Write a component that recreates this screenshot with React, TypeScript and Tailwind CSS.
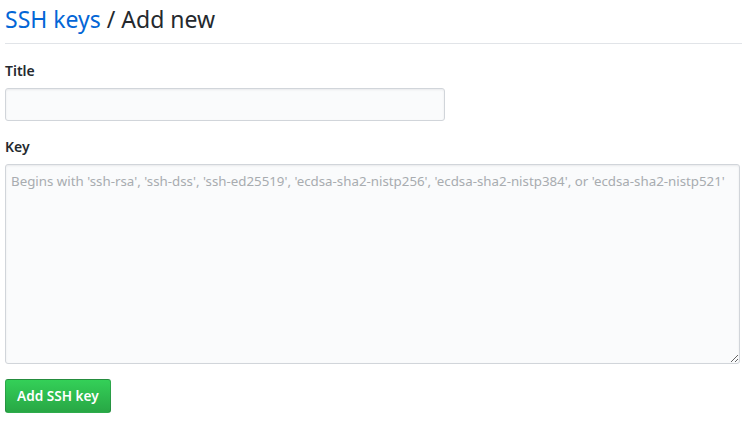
import React from 'react';

const font = { fontFamily: '"Noto Sans", "Open Sans", Arial, sans-serif' };

export default function App() {
  return (
    <div className="w-[753px] h-[427px] bg-white pl-[5px] pr-[11px]" style={font}>
      <div className="flex items-end h-[44px] pb-[9px] border-b border-[#e1e4e8]">
        <h2 className="text-[23px] leading-[30px] font-normal text-[#24292e]">
          <a className="text-[#0366d6]">SSH keys</a> / Add new
        </h2>
      </div>

      <form className="pt-[17px]">
        <label className="block text-[14px] leading-[20px] font-semibold text-[#24292e] mb-[7px]">Title</label>
        <input
          type="text"
          className="block w-[440px] h-[33px] px-2 text-[14px] bg-[#fafbfc] border border-[#d1d5da] rounded-[3px] shadow-[inset_0_1px_2px_rgba(27,31,35,0.075)] outline-none"
        />

        <label className="block text-[14px] leading-[20px] font-semibold text-[#24292e] mt-[16px] mb-[7px]">Key</label>
        <textarea
          className="block w-[735px] h-[200px] pl-[5px] pr-[2px] py-[6px] text-[13.3px] leading-[20px] bg-[#fafbfc] border border-[#d1d5da] rounded-[3px] shadow-[inset_0_1px_2px_rgba(27,31,35,0.075)] outline-none placeholder:text-[#a8acb0]"
          placeholder="Begins with 'ssh-rsa', 'ssh-dss', 'ssh-ed25519', 'ecdsa-sha2-nistp256', 'ecdsa-sha2-nistp384', or 'ecdsa-sha2-nistp521'"
        />

        <button
          type="submit"
          className="mt-[15px] h-[34px] px-[11px] text-[13.6px] font-semibold text-white rounded-[3px] border border-[rgba(27,31,35,0.2)] bg-gradient-to-b from-[#34d058] to-[#28a745]"
        >
          Add SSH key
        </button>
      </form>
    </div>
  );
}
